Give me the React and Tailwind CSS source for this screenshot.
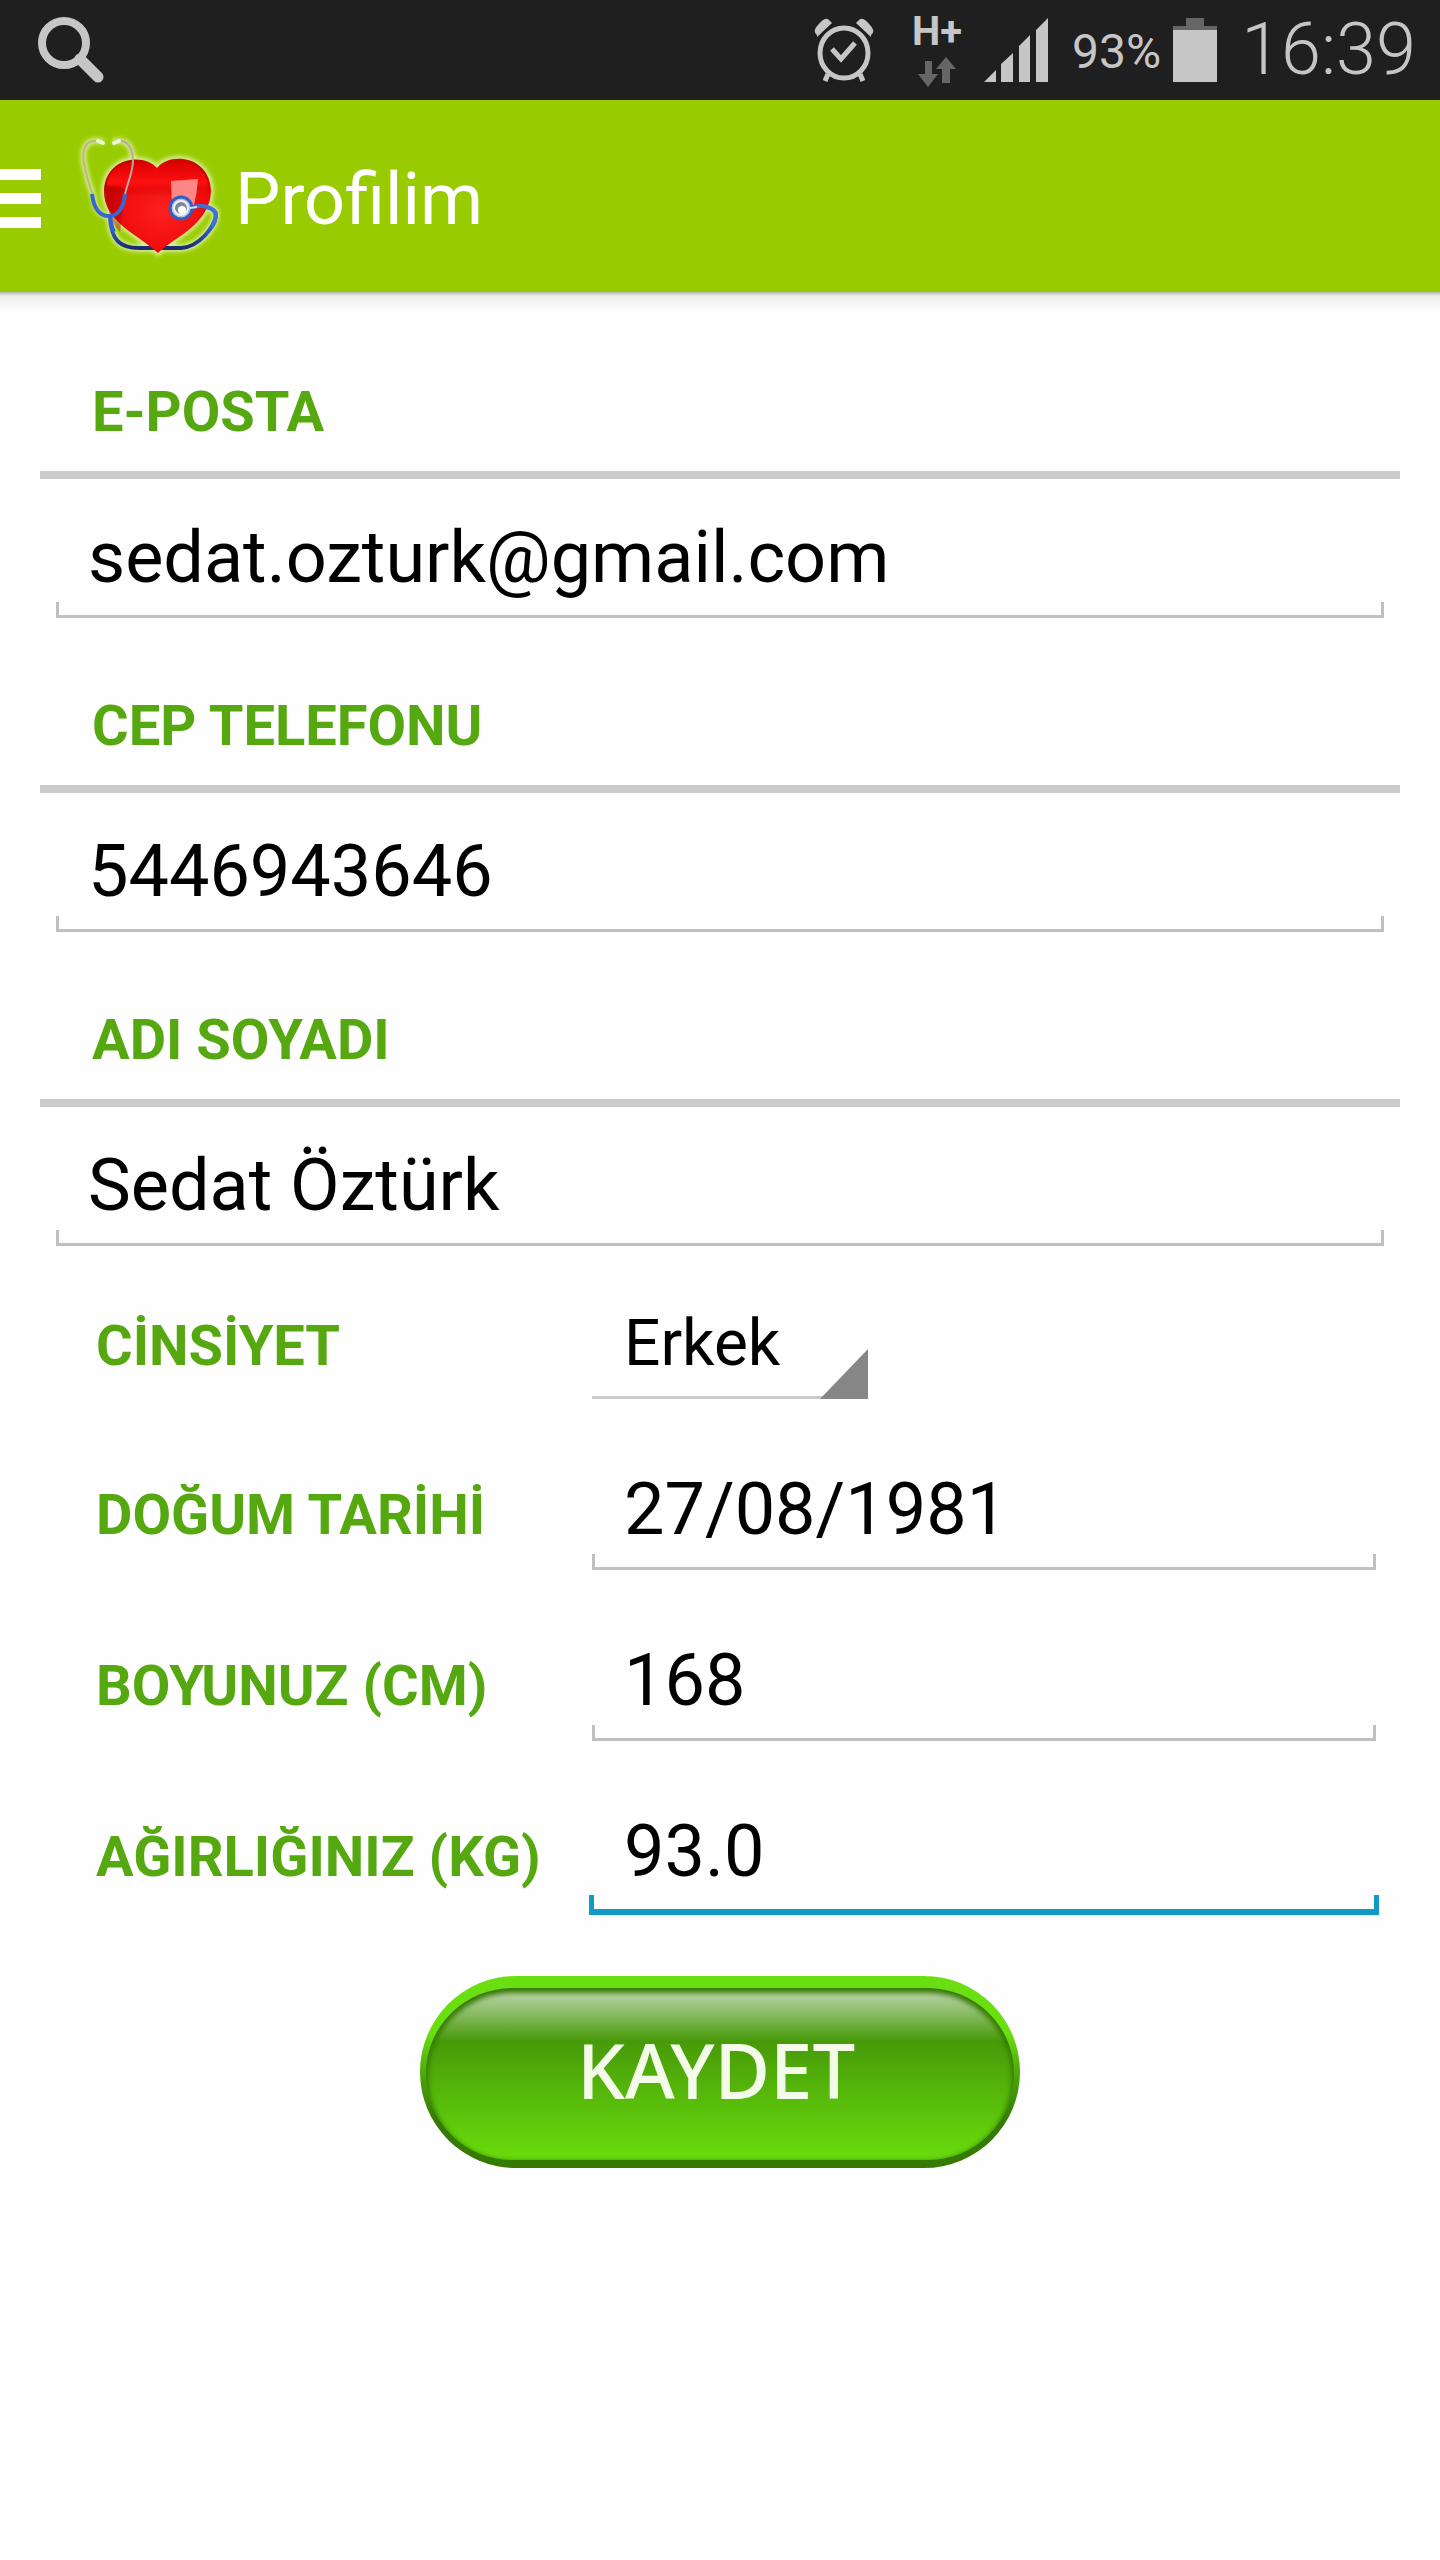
import React from 'react'

const sections = [
	{ id: 'email', label: 'E-POSTA', type: 'email', value: 'sedat.ozturk@gmail.com' },
	{ id: 'phone', label: 'CEP TELEFONU', type: 'tel', value: '5446943646' },
	{ id: 'name', label: 'ADI SOYADI', type: 'text', value: 'Sedat Öztürk' },
]

const rows = [
	{ id: 'birthday', label: 'DOĞUM TARİHİ', value: '27/08/1981' },
	{ id: 'height', label: 'BOYUNUZ (CM)', value: '168' },
	{ id: 'weight', label: 'AĞIRLIĞINIZ (KG)', value: '93.0', active: true },
]

function StatusBar() {
	return (
		<div className="flex h-[100px] items-center bg-[#1f1f1f] pl-9 pr-6 text-[#c6c6c6]">
			<svg className="h-[70px] w-[72px]" viewBox="36 15 72 70" fill="none" stroke="currentColor" aria-hidden="true">
				<circle cx="64" cy="43" r="22" strokeWidth="8" />
				<path d="M80 59 L98 77" strokeWidth="11" strokeLinecap="round" />
			</svg>
			<div className="ml-auto flex items-center">
				<svg className="h-[66px] w-[60px]" viewBox="0 0 60 66" aria-label="Alarm">
					<g fill="none" stroke="currentColor">
						<ellipse cx="30" cy="36" rx="24" ry="25" strokeWidth="5" />
						<path d="M18 32 L27 42 L41 26" strokeWidth="5" />
						<path d="M14 57 L11 64 M46 57 L49 64" strokeWidth="5" />
					</g>
					<path d="M3 18 C-1 15 1 11 4 8 C8 3 12 0 15 3 L18 6 L3 20 Z M57 18 C61 15 59 11 56 8 C52 3 48 0 45 3 L42 6 L57 20 Z" fill="currentColor" />
				</svg>
				<div className="ml-9 flex w-[54px] flex-col items-center gap-2 pt-1">
					<span className="text-[40px] font-bold leading-[32px]">H+</span>
					<svg className="h-8 w-10" viewBox="0 0 40 32" fill="#666" aria-hidden="true">
						<path d="M8 5h7v13h6L11 31 1 18h7z M25 27V13h-6L29 1l10 12h-6v14z" />
					</svg>
				</div>
				<svg className="ml-5 h-16 w-16" viewBox="0 0 64 64" fill="currentColor" aria-label="Signal">
					<path d="M0 64 L12 52 V64z M17 64 V46 L29 35 V64z M35 64 V28 L46 17 V64z M52 64 V12 L64 0 V64z" />
				</svg>
				<span className="ml-6 pt-1 text-5xl">93%</span>
				<svg className="ml-3 h-16 w-11" viewBox="0 0 44 64" aria-label="Battery">
					<path d="M13 0h18v8h13v4H0V8h13z" fill="#666" />
					<path d="M0 12h44v52H0z" fill="currentColor" />
				</svg>
				<span className="ml-6 text-7xl font-light leading-[84px]">16:39</span>
			</div>
		</div>
	)
}

function HeartLogo() {
	return (
		<svg className="h-[126px] w-[144px]" viewBox="78 133 144 126" fill="none" aria-hidden="true">
			<defs>
				<radialGradient id="heart" cx="0.55" cy="0.55" r="0.65">
					<stop offset="0" stopColor="#ff2020" />
					<stop offset="0.65" stopColor="#ee0b0b" />
					<stop offset="1" stopColor="#b80000" />
				</radialGradient>
				<linearGradient id="gloss" x1="0" y1="0" x2="0" y2="1">
					<stop offset="0" stopColor="#d90000" />
					<stop offset="0.6" stopColor="#ff1010" />
					<stop offset="1" stopColor="#c00000" stopOpacity="0" />
				</linearGradient>
				<linearGradient id="tube" x1="0" y1="0" x2="0" y2="1">
					<stop offset="0" stopColor="#3f78e0" />
					<stop offset="0.6" stopColor="#2c58bd" />
					<stop offset="1" stopColor="#182c70" />
				</linearGradient>
				<filter id="glow" x="-20%" y="-20%" width="140%" height="140%">
					<feGaussianBlur stdDeviation="2" />
				</filter>
			</defs>
			<g filter="url(#glow)" stroke="#f0f6c0" strokeLinecap="round" opacity="0.85">
				<path d="M158 168 C146 153 107 156 105 190 C104 222 140 235 159 253 C174 238 212 224 212 190 C210 155 170 152 158 168z" strokeWidth="5" />
				<path d="M102 141 C84 138 82 153 86 168 C89 184 93 190 94 196 C96 210 101 216 110 216 C120 215 125 204 126 194 C130 178 134 172 134 160 C133 146 128 139 116 141" strokeWidth="5" />
				<path d="M111 217 C112 240 121 248 140 248 H182 C200 247 216 227 217 214 C216 207 204 206 193 208" strokeWidth="7" />
			</g>
			<path d="M111 217 C112 240 121 248 140 248 H182 C200 247 216 227 217 214 C216 207 204 206 193 208" stroke="url(#tube)" strokeWidth="4" />
			<path d="M158 168 C146 153 107 156 105 190 C104 222 140 235 159 253 C174 238 212 224 212 190 C210 155 170 152 158 168z" fill="url(#heart)" />
			<path d="M158 171 C147 158 112 157 108 184 C126 205 176 196 209 188 C207 158 170 155 158 171z" fill="url(#gloss)" />
			<path d="M108 190 Q116 182 126 190 L121 232 Q107 218 108 190z" fill="#a80000" opacity="0.4" />
			<path d="M172 181 L199 179 Q198 193 195 205 L173 205z" fill="#ff9c9c" opacity="0.85" />
			<path d="M102 141 C84 138 82 153 86 168 C89 184 93 190 94 196" stroke="#b9b497" strokeWidth="2" />
			<path d="M116 141 C128 139 133 146 134 160 C134 172 130 178 126 194" stroke="#b9a8a0" strokeWidth="2" />
			<path d="M99 141 L104 143 M120 141 L115 143" stroke="#eef5d8" strokeWidth="4" strokeLinecap="round" />
			<path d="M93 194 C95 210 101 216 110 216 C120 216 125 206 126 194" stroke="#3568d4" strokeWidth="4" />
			<path d="M111 216 Q112 226 115 232" stroke="#3063cf" strokeWidth="4" />
			<path d="M194 207 C208 204 217 209 217 217 Q216 223 213 227" stroke="#3a72d8" strokeWidth="4" />
			<circle cx="182" cy="208" r="11" fill="#b9c0cf" stroke="#2e5fc4" strokeWidth="3" />
			<circle cx="182" cy="208" r="7" fill="#7e8796" stroke="#eef2f8" strokeWidth="2" />
			<circle cx="183" cy="210" r="4" fill="#fff" />
			<path d="M191 208 L198 207" stroke="#d5def0" strokeWidth="2" />
		</svg>
	)
}

function Header() {
	return (
		<header>
			<div className="flex h-48 items-center bg-[#99cc00]">
				<button type="button" aria-label="Menu" className="flex w-[41px] flex-col gap-[13px] pt-1">
					<span className="h-[11px] w-full bg-white"></span>
					<span className="h-[11px] w-full bg-white"></span>
					<span className="h-[11px] w-full bg-white"></span>
				</button>
				<div className="ml-9">
					<HeartLogo />
				</div>
				<h1 className="ml-[14px] pt-2 text-7xl leading-[84px] text-white">Profilim</h1>
			</div>
			<div className="h-5 bg-linear-to-b from-[#b4b4b4] via-[#eeeeea] via-20% to-[#fefefe]"></div>
		</header>
	)
}

/* text box with the bracket-shaped underline */
function Field({ id, type = 'text', value, active }) {
	return (
		<div className="min-w-0 flex-1">
			<input id={id} type={type} defaultValue={value} className="block h-[86px] w-full bg-transparent pl-8 text-7xl leading-[86px] outline-none" />
			{active ? (
				<div className="-mx-[3px] h-5 border-x-[5px] border-b-[6px] border-[#1299c8]"></div>
			) : (
				<div className="mt-px h-4 border-x-[3px] border-b-[3px] border-[#c0c0c0]"></div>
			)}
		</div>
	)
}

function SaveButton() {
	return (
		<button type="submit" className="h-48 w-[600px] rounded-full bg-linear-to-b from-[#6adf10] from-30% via-[#4aa60a] via-52% to-[#357a02] to-75% px-[6px] pb-2 pt-3">
			<span className="flex h-full items-center justify-center rounded-full bg-[linear-gradient(#b9d3a6_3%,#479a09_31%,#67da0c_97%)] pb-2 pr-2 font-['Noto_Sans',sans-serif] text-[76px] font-medium leading-[84px] text-[#f4fbe9] shadow-[inset_0_3px_5px_2px_#357a02]">
				KAYDET
			</span>
		</button>
	)
}

export default function App() {
	return (
		<div className="min-h-screen bg-[#fefefe] font-[Roboto,sans-serif] text-black">
			<StatusBar />
			<Header />
			<form className="px-10 pt-[68px]" onSubmit={(e) => e.preventDefault()}>
				{sections.map((s) => (
					<section key={s.id} className="mb-[76px]">
						<label htmlFor={s.id} className="block pl-[52px] text-[56px] font-bold leading-[64px] text-[#55a810]">{s.label}</label>
						<div className="mb-9 mt-[27px] h-2 bg-[#cbcbcb]"></div>
						<div className="mx-4 flex">
							<Field id={s.id} type={s.type} value={s.value} />
						</div>
					</section>
				))}

				<div className="-mt-4 flex flex-col gap-[68px] pl-14 pr-6">
					<div className="flex items-baseline">
						<label htmlFor="gender" className="w-[496px] shrink-0 text-[56px] font-bold leading-[64px] text-[#55a810]">CİNSİYET</label>
						<div className="relative w-[276px] border-b-[3px] border-[#cbcbcb]">
							<select id="gender" defaultValue="Erkek" className="block h-[90px] w-full appearance-none bg-transparent pb-[14px] pl-8 text-[64px] leading-[76px] outline-none">
								<option>Erkek</option>
								<option>Kadın</option>
							</select>
							<svg className="pointer-events-none absolute -bottom-[3px] right-0 h-[50px] w-12" viewBox="0 0 48 50" aria-hidden="true">
								<path d="M48 0 V50 H0z" fill="#868686" />
							</svg>
						</div>
					</div>
					{rows.map((r) => (
						<div key={r.id} className="flex items-baseline">
							<label htmlFor={r.id} className="w-[496px] shrink-0 text-[56px] font-bold leading-[64px] text-[#55a810]">{r.label}</label>
							<Field id={r.id} value={r.value} active={r.active} />
						</div>
					))}
				</div>

				<div className="mt-[61px] flex justify-center">
					<SaveButton />
				</div>
			</form>
		</div>
	)
}
